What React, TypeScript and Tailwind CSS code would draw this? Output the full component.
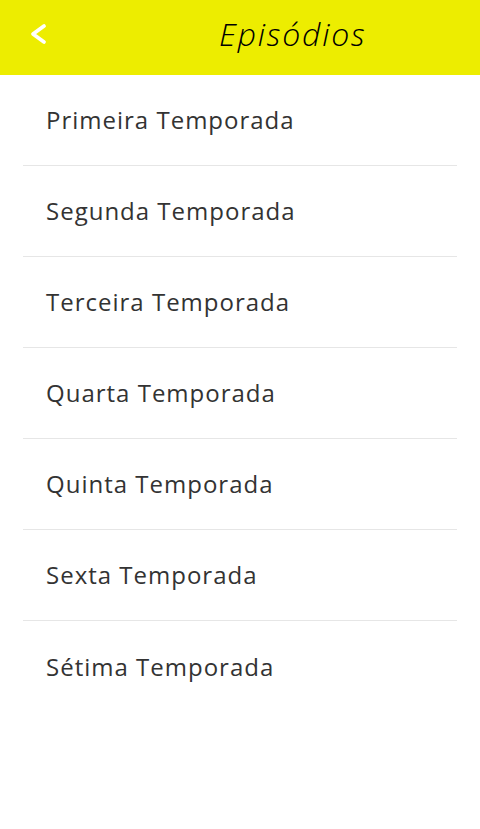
import React from "react";

const SEASONS = [
  "Primeira Temporada",
  "Segunda Temporada",
  "Terceira Temporada",
  "Quarta Temporada",
  "Quinta Temporada",
  "Sexta Temporada",
  "Sétima Temporada",
];

export default function App() {
  return (
    <div className="min-h-[829px] bg-white" style={{ fontFamily: "'Open Sans', sans-serif" }}>
      <header className="h-[75px] pb-[8px] bg-[#EDED00] flex items-center">
        <button className="ml-[29px] w-[18px] h-[22px] flex items-center justify-center">
          <svg width="18" height="22" viewBox="0 0 18 22" fill="none" stroke="white" strokeWidth="3.8" strokeLinecap="round" strokeLinejoin="round">
            <polyline points="15,3 4,11 15,19" />
          </svg>
        </button>
        <h1 className="ml-[172px] text-[32px] italic font-light text-black tracking-[1.8px] leading-none">
          Episódios
        </h1>
      </header>
      <ul className="mx-[23px]">
        {SEASONS.map((s, i) => (
          <li
            key={s}
            className={`h-[91px] flex items-center pl-[23px] text-[24px] text-[#333333] tracking-[1px] ${i < SEASONS.length - 1 ? "border-b border-[#e6e6e6]" : ""}`}
          >
            {s}
          </li>
        ))}
      </ul>
    </div>
  );
}
